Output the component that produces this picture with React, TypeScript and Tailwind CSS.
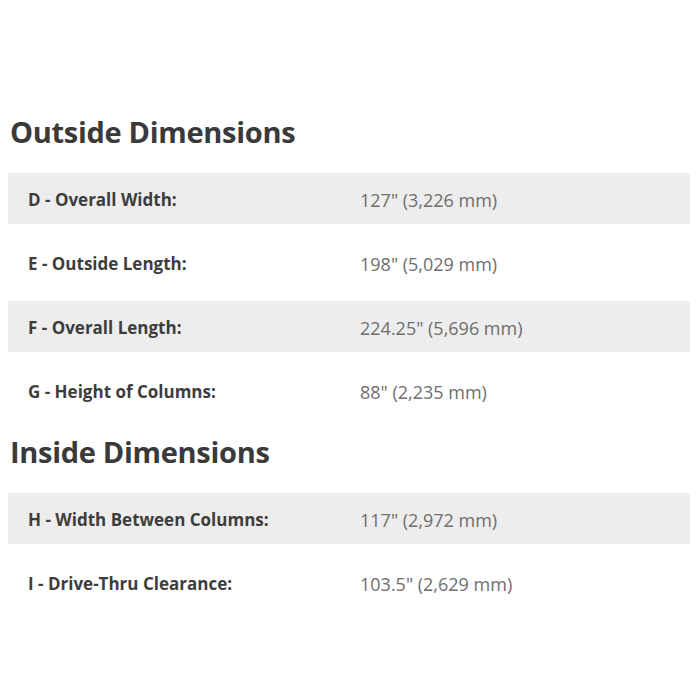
const outside = [
  { label: 'D - Overall Width:', value: '127" (3,226 mm)' },
  { label: 'E - Outside Length:', value: '198" (5,029 mm)' },
  { label: 'F - Overall Length:', value: '224.25" (5,696 mm)' },
  { label: 'G - Height of Columns:', value: '88" (2,235 mm)' },
];

const inside = [
  { label: 'H - Width Between Columns:', value: '117" (2,972 mm)' },
  { label: 'I - Drive-Thru Clearance:', value: '103.5" (2,629 mm)' },
];

function SpecRow({ label, value, shaded }: { label: string; value: string; shaded: boolean }) {
  return (
    <div className={`flex h-[51px] items-center pt-[3px] ${shaded ? 'bg-[#ededed]' : 'bg-white'}`}>
      <div className="w-[352px] pl-[20px] text-[17px] font-bold text-[#3d3d3d]">{label}</div>
      <div className="text-[18px] text-[#6e6e6e]">{value}</div>
    </div>
  );
}

function Section({ title, rows }: { title: string; rows: { label: string; value: string }[] }) {
  return (
    <section>
      <h2 className="ml-[10px] mb-[23px] text-[29px] leading-[36px] font-bold tracking-[-0.3px] text-[#3a3a3a]">
        {title}
      </h2>
      <div className="ml-[8px] mr-[10px] flex flex-col gap-[13px]">
        {rows.map((r, i) => (
          <SpecRow key={r.label} label={r.label} value={r.value} shaded={i % 2 === 0} />
        ))}
      </div>
    </section>
  );
}

export default function App() {
  return (
    <div className="h-[700px] w-[700px] bg-white pt-[114px] font-['Open_Sans',sans-serif]">
      <Section title="Outside Dimensions" rows={outside} />
      <div className="h-[18px]" />
      <Section title="Inside Dimensions" rows={inside} />
    </div>
  );
}
